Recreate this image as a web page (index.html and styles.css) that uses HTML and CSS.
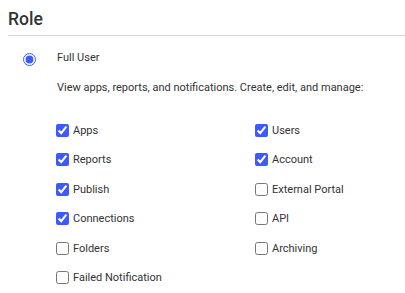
FILE: index.html
```html
<!DOCTYPE html>
<html lang="en">
<head>
    <meta charset="UTF-8">
    <meta name="viewport" content="width=device-width, initial-scale=1.0">
    <title>Role</title>
    <link rel="stylesheet" href="styles.css">
</head>
<body>
    <div class="section">
        <h2 class="title">Role</h2>

        <div class="role-option">
            <input id="fullUser" class="radio" type="radio" name="role" checked>
            <div class="role-text">
                <label for="fullUser" class="role-name">Full User</label>
                <div class="role-desc">View apps, reports, and notifications. Create, edit, and manage:</div>
            </div>
        </div>

        <div class="perms">
            <label class="perm"><input type="checkbox" checked> Apps</label>
            <label class="perm"><input type="checkbox" checked> Users</label>
            <label class="perm"><input type="checkbox" checked> Reports</label>
            <label class="perm"><input type="checkbox" checked> Account</label>
            <label class="perm"><input type="checkbox" checked> Publish</label>
            <label class="perm"><input type="checkbox"> External Portal</label>
            <label class="perm"><input type="checkbox" checked> Connections</label>
            <label class="perm"><input type="checkbox"> API</label>
            <label class="perm"><input type="checkbox"> Folders</label>
            <label class="perm"><input type="checkbox"> Archiving</label>
            <label class="perm"><input type="checkbox"> Failed Notification</label>
        </div>
    </div>
</body>
</html>
```

FILE: styles.css
```css
body {
    margin: 0;
    font-family: Roboto, "Liberation Sans", sans-serif;
    background-color: #fff;
    color: #333;
}
.section {
    padding-left: 8px;
}
.title {
    margin: 9px 0 0 0;
    padding-bottom: 5px;
    font-size: 17.5px;
    font-weight: 500;
    line-height: 21px;
    color: #333;
    border-bottom: 1px solid #d9d9d9;
}
.role-option {
    display: flex;
    align-items: flex-start;
    padding-left: 15px;
    margin-top: 15px;
}
.radio {
    width: 13px;
    height: 13px;
    margin: 2px 0 0 0;
    accent-color: #3d5afe;
}
.role-text {
    margin-left: 21px;
    font-size: 11px;
    line-height: 13px;
}
.role-desc {
    margin-top: 17px;
}
.perms {
    display: grid;
    grid-template-columns: 199px 1fr;
    row-gap: 16.4px;
    margin: 30px 0 0 48px;
}
.perm {
    display: flex;
    align-items: center;
    gap: 4px;
    height: 13px;
    font-size: 11px;
}
.perm input {
    width: 13px;
    height: 13px;
    margin: 0;
    accent-color: #3d5afe;
}
```
